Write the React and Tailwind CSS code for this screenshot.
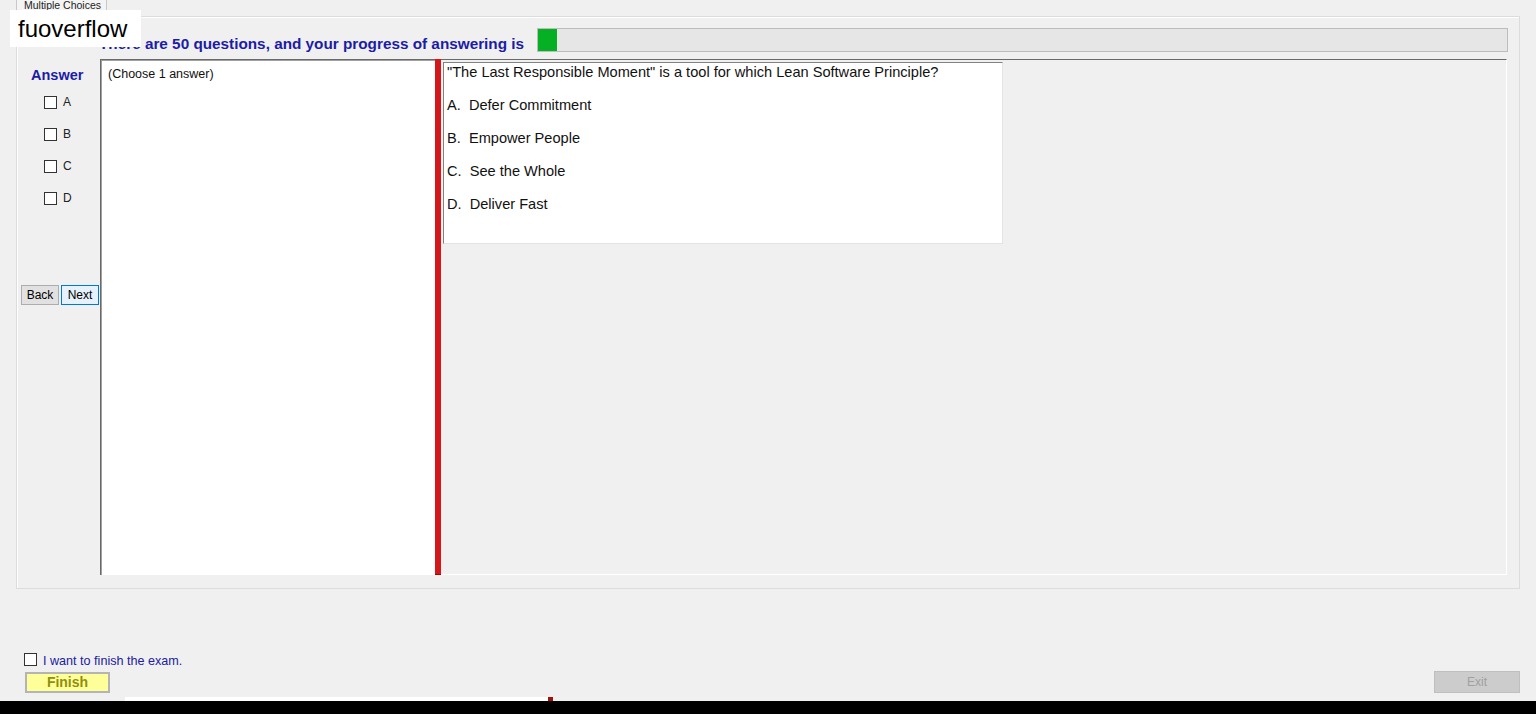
import React from 'react';

const options = [
  { key: 'A', text: 'Defer Commitment' },
  { key: 'B', text: 'Empower People' },
  { key: 'C', text: 'See the Whole' },
  { key: 'D', text: 'Deliver Fast' },
];

const Box = () => (
  <span className="inline-block w-[13px] h-[13px] bg-white border border-[#333333]" />
);

export default function App() {
  return (
    <div className="relative w-[1536px] h-[714px] overflow-hidden bg-[#f0f0f0] font-['Liberation_Sans',Arial,sans-serif] text-black">
      {/* tab */}
      <div className="ml-[16px] -mt-[1px] w-[91px] h-[14px] border border-t-0 border-[#c8c8c8] bg-[#f4f4f4]">
        <div className="text-[10.5px] leading-[12px] pl-[7px] text-[#222] whitespace-nowrap">Multiple Choices</div>
      </div>

      {/* group box */}
      <div className="ml-[16px] mt-[3px] w-[1504px] h-[573px] border border-[#dcdcdc] shadow-[inset_1px_1px_0_#ffffff] flex flex-col">
        {/* header */}
        <div className="h-[42px] flex items-start pl-[82px] pr-[11px]">
          <div className="mt-[18px] w-[438px] text-[15.3px] leading-[18px] font-bold text-[#1c1ca6] whitespace-nowrap">
            There are 50 questions, and your progress of answering is
          </div>
          <div className="mt-[11px] flex-1 h-[24px] bg-[#e6e6e6] border border-[#bcbcbc] flex">
            <div className="w-[19px] h-full bg-[#06b025]" />
          </div>
        </div>

        {/* main */}
        <div className="h-[516px] flex pr-[12px]">
          {/* answer column */}
          <div className="w-[83px] flex flex-col">
            <div className="mt-[8px] pl-[14px] text-[14.5px] leading-[16px] font-bold text-[#1c1ca6]">Answer</div>
            <div className="mt-[13px] pl-[27px] flex flex-col gap-[19px]">
              {options.map((o) => (
                <div key={o.key} className="flex items-center h-[13px]">
                  <Box />
                  <span className="ml-[6px] text-[12px] leading-[13px] text-[#222]">{o.key}</span>
                </div>
              ))}
            </div>
            <div className="mt-[80px] pl-[4px] flex gap-[2px]">
              <button className="w-[38px] h-[20px] bg-[#e1e1e1] border border-[#adadad] text-[12px] leading-[18px] text-black">Back</button>
              <button className="w-[38px] h-[20px] bg-[#e5f1fb] border border-[#0078d7] text-[12px] leading-[18px] text-black">Next</button>
            </div>
          </div>

          {/* split container */}
          <div className="flex-1 flex">
            <div className="w-[335px] bg-white border-t border-l border-t-[#696969] border-l-[#696969] shadow-[inset_1px_1px_0_#a0a0a0]">
              <div className="pl-[7px] pt-[6px] text-[12.5px] leading-[16px] text-[#111] whitespace-nowrap">(Choose 1 answer)</div>
            </div>
            <div className="w-[6px] bg-[#d4171b] border-b border-[#a00]" />
            <div className="flex-1 border-t border-[#696969] border-r border-r-[#ffffff] border-b border-b-[#ffffff] pl-[2px] pt-[2px]">
              <div className="w-[560px] h-[182px] bg-white border border-[#828282] border-r-[#e3e3e3] border-b-[#e3e3e3] pl-[3px] flex flex-col gap-[13px] text-[14.6px] leading-[20px] text-[#111]">
                <div className="-mt-[1px]">"The Last Responsible Moment" is a tool for which Lean Software Principle?</div>
                {options.map((o) => (
                  <div key={o.key}>
                    {o.key}.&nbsp;&nbsp;{o.text}
                  </div>
                ))}
              </div>
            </div>
          </div>
        </div>
      </div>

      {/* bottom area */}
      <div className="h-[108px] flex items-start justify-between pl-[24px] pr-[16px]">
        <div className="pt-[64px] flex flex-col">
          <div className="flex items-start h-[13px]">
            <Box />
            <span className="ml-[6px] mt-[1px] text-[12.6px] leading-[15px] text-[#2020a0]">I want to finish the exam.</span>
          </div>
          <button className="mt-[6px] ml-[1px] w-[85px] h-[21px] bg-[#ffff99] border-2 border-[#b4b4b4] text-[14px] leading-[17px] font-bold text-[#8f8f10]">
            Finish
          </button>
        </div>
        <button className="mt-[82px] w-[86px] h-[22px] bg-[#cccccc] border border-[#bfbfbf] text-[12px] leading-[20px] text-[#a0a0a0]">
          Exit
        </button>
      </div>

      {/* taskbar edge */}
      <div className="h-[4px] flex">
        <div className="ml-[125px] w-[423px] h-full bg-white" />
        <div className="w-[5px] h-full bg-[#a01010]" />
      </div>
      <div className="h-[13px] bg-black" />

      {/* watermark overlay */}
      <div className="absolute left-[10px] top-[10px] w-[131px] h-[37px] bg-white pl-[8px] text-[24px] leading-[37px] text-black">
        fuoverflow
      </div>
    </div>
  );
}
